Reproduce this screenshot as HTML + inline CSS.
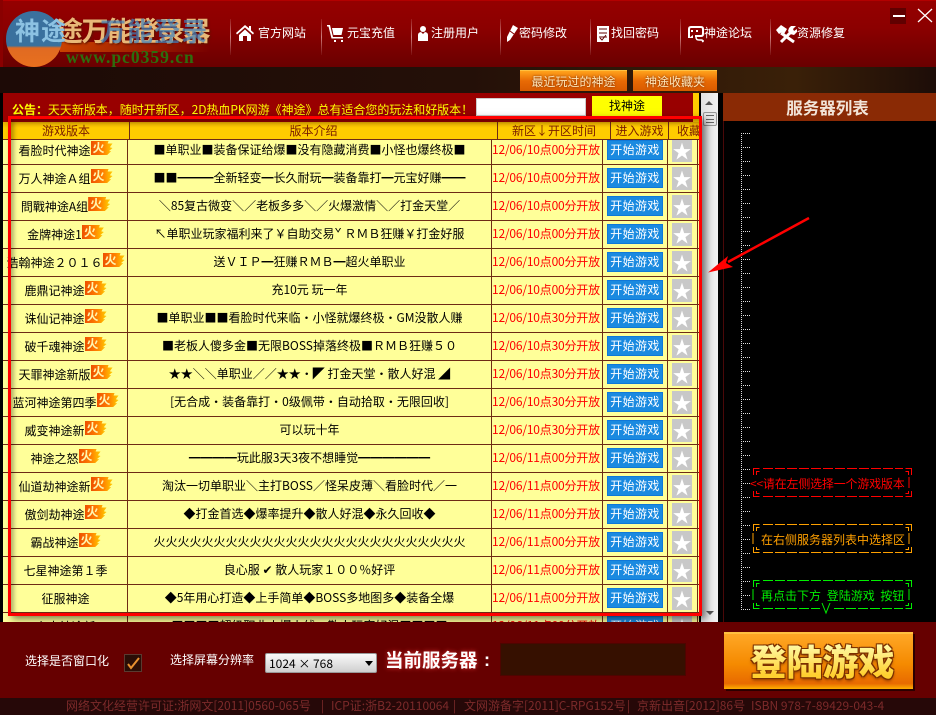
<!DOCTYPE html>
<html><head><meta charset="utf-8"><style>
*{box-sizing:border-box;margin:0;padding:0}
html,body{width:936px;height:715px;overflow:hidden;background:#000}
body{position:relative;font:12px/14px "WenQuanYi Zen Hei","Noto Sans CJK SC",sans-serif;color:#000}
.a{position:absolute;white-space:nowrap}
#head{left:0;top:0;width:936px;height:67px;background:linear-gradient(#950000,#8c0000 40%,#6a0000);border-top:1px solid #b30000}
.nav{color:#fff;top:26px;font-size:12px}
.sep{top:19px;width:1px;height:36px;background:linear-gradient(rgba(255,255,255,.1),rgba(255,210,210,.6),rgba(255,255,255,.05))}
#strip{left:0;top:67px;width:936px;height:26px;background:linear-gradient(90deg,#1d0a06,#241008 50%,#3a2008 85%,#1d0d08)}
.tb{top:70px;height:21px;background:linear-gradient(#ffa31c,#e86a04 50%,#d85a00);color:#ffe6b8;text-align:center;line-height:21px;text-shadow:0 0 2px #6a2500;border-top:1px solid #ffc040}
#tbl{left:3px;top:93px;width:696px;height:529px;background:#ffff99;overflow:hidden}
#notice{left:0;top:0;width:690px;height:29px;background:#990000}
#thead{left:0;top:29px;width:696px;height:18px;background:linear-gradient(#e3aa00,#ffcc00 35%);color:#7a1d00;line-height:18px;border-bottom:1px solid #6e2b15}
.th{top:0;text-align:center}
.vl{top:0;width:1px;background:#6e2b15}
.r{position:absolute;left:0;width:696px;height:28px;border-bottom:1px solid #6e2b15}
.n{position:absolute;left:0;top:1px;width:125px;height:26px;display:flex;justify-content:center;align-items:center;white-space:nowrap}
.d{position:absolute;left:125px;width:363px;top:0;height:26px;line-height:26px;text-align:center;white-space:nowrap}
.t{position:absolute;left:489px;top:0;height:26px;line-height:26px;color:#f00;white-space:nowrap;letter-spacing:-.2px}
.b{position:absolute;left:604px;top:3px;width:56px;height:20px;background:#1a8ae0;color:#fff;text-align:center;line-height:18px;border:1px solid #0f78d8;letter-spacing:.4px}
.s{position:absolute;left:669px;top:2px;width:20px;height:23px;background:#c8c8c8;color:#fff;text-align:center;font-size:19px;line-height:23px}
.f{display:inline-block;position:relative;top:-3px;width:22px;height:14px;background:linear-gradient(90deg,#ee5000,#ff8000 55%,#ffd000);color:#fff6b0;font-size:12px;font-weight:bold;line-height:14px;padding-left:2px;clip-path:polygon(0 0,82% 0,78% 18%,100% 18%,88% 45%,100% 50%,84% 72%,94% 72%,76% 100%,0 100%)}
#sb{left:701px;top:93px;width:17px;height:529px;background:linear-gradient(90deg,#e2e2e2,#f2f2f2)}
#foot{left:0;top:622px;width:936px;height:76px;background:#660000}
#bot{left:0;top:698px;width:936px;height:17px;background:#260808;color:#7c2a2a;line-height:16px}
</style></head><body>
<div class="a" id="head"></div>
<div class="a" style="left:0;top:0;width:3px;height:67px;background:#8a0000"></div>

<div class="a" style="left:60px;top:42px;width:150px;height:10px;background:linear-gradient(90deg,#ff7000,rgba(160,0,0,0));opacity:.6"></div>
<div class="a" style="left:56px;top:14px;font:bold 27px/32px 'Noto Sans CJK SC',sans-serif;color:#e9b878;text-shadow:1px 1px 2px #5a1500;letter-spacing:-1.500px">途万能登录器</div>
<div class="a" style="left:6px;top:11px;width:56px;height:56px;border-radius:50%;background:linear-gradient(rgba(50,125,175,.9) 0,rgba(50,125,175,.9) 62%,#e06a22 66%,#e8701e)"></div>
<div class="a" style="left:15px;top:14px;font:bold 25px/32px 'Noto Sans CJK SC',sans-serif;color:#8cc2e2;letter-spacing:1px">神途</div>
<div class="a" style="left:100px;top:15px;font:bold 26px/32px 'Noto Sans CJK SC',sans-serif;color:rgba(60,130,190,.7);letter-spacing:1px">万能登录</div>
<div class="a" style="left:66px;top:48px;font:bold 17.500px/19px 'Liberation Serif',serif;color:#2d6e0e;letter-spacing:1px">www.pc0359.cn</div>

<div class="a sep" style="left:230px"></div><div class="a sep" style="left:321px"></div><div class="a sep" style="left:411px"></div><div class="a sep" style="left:500px"></div><div class="a sep" style="left:590px"></div><div class="a sep" style="left:680px"></div><div class="a sep" style="left:770px"></div>

<svg class="a" style="left:0;top:0" width="936" height="67" fill="#fff">
<path d="M245 25l-9 8 1 1.500 8-7 8 7 1-1.500-3-2.600V26h-2v2.200z"/><path d="M239 35l6-5.500 6 5.500v6h-4v-5h-4v5h-4z"/>
<path d="M327 25h3l3 12h10v1.500h-11.500l-3-12H327z"/><path d="M332 28h11l-1.500 7h-8zM334 40h2v2h-2zM341 40h2v2h-2z"/>
<circle cx="423" cy="29" r="3"/><path d="M418 41v-6q0-2.500 3-3l2 2 2-2q3 .500 3 3v6z"/>
<path d="M513 25l5 3-8 12-3 2 0-5z"/><path d="M510 31l4 3" stroke="#800000"/>
<path d="M597 26h12v16h-12z"/><path d="M599 29h8M599 33h8M599 37h8" stroke="#600000"/><path d="M600 38l2 2 4-5" stroke="#600000" fill="none"/>
<path d="M689 38v-9q0-2 2-2h10q2 0 2 2v5q0 2-2 2h-6" fill="none" stroke="#fff" stroke-width="2"/><path d="M689 38l4-3v3z"/><path d="M691 30h2v2h-2zM696 30h2v2h-2z"/><path d="M696 37q0 3 3 3h3l1 2v-2" fill="none" stroke="#fff" stroke-width="1.500"/>
<path d="M781 33L794 42M793 30L781 42" stroke="#fff" stroke-width="3" fill="none"/><path d="M776 30l5-5 6 4-3 5-2-2-3 2zM789 28l2-2 5 0-3 3 1 2 3-2 0 3-3 3-4-1-2-3z"/>
<rect x="890" y="8" width="16" height="16" fill="#600000"/><rect x="893" y="15" width="12" height="2"/>
<path d="M918 9l14 13M932 9l-14 13" stroke="#fff" stroke-width="1.300"/>
</svg>
<div class="a nav" style="left:258px">官方网站</div>
<div class="a nav" style="left:347px">元宝充值</div>
<div class="a nav" style="left:431px">注册用户</div>
<div class="a nav" style="left:519px">密码修改</div>
<div class="a nav" style="left:611px">找回密码</div>
<div class="a nav" style="left:704px">神途论坛</div>
<div class="a nav" style="left:797px">资源修复</div>

<div class="a" id="strip"></div>
<div class="a tb" style="left:520px;width:107px">最近玩过的神途</div>
<div class="a tb" style="left:633px;width:84px">神途收藏夹</div>

<div class="a" id="tbl">
<div class="r" style="top:44px"><div class="n">看脸时代神途<span class="f">火</span></div><div class="d">■单职业■装备保证给爆■没有隐藏消费■小怪也爆终极■</div><div class="t">12/06/10点00分开放</div><div class="b">开始游戏</div><div class="s">★</div></div>
<div class="r" style="top:72px"><div class="n">万人神途Ａ组<span class="f">火</span></div><div class="d">■■━━━全新轻变━长久耐玩━装备靠打━元宝好赚━━</div><div class="t">12/06/10点00分开放</div><div class="b">开始游戏</div><div class="s">★</div></div>
<div class="r" style="top:100px"><div class="n">問戰神途A组<span class="f">火</span></div><div class="d">＼85复古微变＼／老板多多＼／火爆激情＼／打金天堂／</div><div class="t">12/06/10点00分开放</div><div class="b">开始游戏</div><div class="s">★</div></div>
<div class="r" style="top:128px"><div class="n">金牌神途1<span class="f">火</span></div><div class="d">↖单职业玩家福利来了￥自助交易ˇ ＲＭＢ狂赚￥打金好服</div><div class="t">12/06/10点00分开放</div><div class="b">开始游戏</div><div class="s">★</div></div>
<div class="r" style="top:156px"><div class="n">浩翰神途２０１６<span class="f">火</span></div><div class="d">送ＶＩＰ━狂赚ＲＭＢ━超火单职业</div><div class="t">12/06/10点00分开放</div><div class="b">开始游戏</div><div class="s">★</div></div>
<div class="r" style="top:184px"><div class="n">鹿鼎记神途<span class="f">火</span></div><div class="d">充10元 玩一年</div><div class="t">12/06/10点00分开放</div><div class="b">开始游戏</div><div class="s">★</div></div>
<div class="r" style="top:212px"><div class="n">诛仙记神途<span class="f">火</span></div><div class="d">■单职业■■看脸时代来临·小怪就爆终极·GM没散人赚</div><div class="t">12/06/10点30分开放</div><div class="b">开始游戏</div><div class="s">★</div></div>
<div class="r" style="top:240px"><div class="n">破千魂神途<span class="f">火</span></div><div class="d">■老板人傻多金■无限BOSS掉落终极■ＲＭＢ狂赚５０</div><div class="t">12/06/10点30分开放</div><div class="b">开始游戏</div><div class="s">★</div></div>
<div class="r" style="top:268px"><div class="n">天罪神途新版<span class="f">火</span></div><div class="d">★★＼＼单职业／／★★·◤ 打金天堂·散人好混 ◢</div><div class="t">12/06/10点30分开放</div><div class="b">开始游戏</div><div class="s">★</div></div>
<div class="r" style="top:296px"><div class="n">蓝河神途第四季<span class="f">火</span></div><div class="d">[无合成·装备靠打·0级佩带·自动拾取·无限回收]</div><div class="t">12/06/10点30分开放</div><div class="b">开始游戏</div><div class="s">★</div></div>
<div class="r" style="top:324px"><div class="n">威变神途新<span class="f">火</span></div><div class="d">可以玩十年</div><div class="t">12/06/10点30分开放</div><div class="b">开始游戏</div><div class="s">★</div></div>
<div class="r" style="top:352px"><div class="n">神途之怒<span class="f">火</span></div><div class="d">━━━━玩此服3天3夜不想睡觉━━━━━━</div><div class="t">12/06/11点00分开放</div><div class="b">开始游戏</div><div class="s">★</div></div>
<div class="r" style="top:380px"><div class="n">仙道劫神途新<span class="f">火</span></div><div class="d">淘汰一切单职业＼主打BOSS／怪呆皮薄＼看脸时代／一</div><div class="t">12/06/11点00分开放</div><div class="b">开始游戏</div><div class="s">★</div></div>
<div class="r" style="top:408px"><div class="n">傲剑劫神途<span class="f">火</span></div><div class="d">◆打金首选◆爆率提升◆散人好混◆永久回收◆</div><div class="t">12/06/11点00分开放</div><div class="b">开始游戏</div><div class="s">★</div></div>
<div class="r" style="top:436px"><div class="n">霸战神途<span class="f">火</span></div><div class="d">火火火火火火火火火火火火火火火火火火火火火火火火火火</div><div class="t">12/06/11点00分开放</div><div class="b">开始游戏</div><div class="s">★</div></div>
<div class="r" style="top:464px"><div class="n">七星神途第１季</div><div class="d">良心服 ✔ 散人玩家１００％好评</div><div class="t">12/06/11点00分开放</div><div class="b">开始游戏</div><div class="s">★</div></div>
<div class="r" style="top:492px"><div class="n">征服神途</div><div class="d">◆5年用心打造◆上手简单◆BOSS多地图多◆装备全爆</div><div class="t">12/06/11点00分开放</div><div class="b">开始游戏</div><div class="s">★</div></div>
<div class="r" style="top:520px"><div class="n">上古神途新</div><div class="d">■■■■超级职业火爆上线·散人玩家好混■■■■</div><div class="t">12/06/11点00分开放</div><div class="b">开始游戏</div><div class="s">★</div></div>
<div class="a vl" style="left:124px;top:43px;height:490px"></div>
<div class="a vl" style="left:488px;top:43px;height:490px"></div>
<div class="a vl" style="left:599px;top:43px;height:490px"></div>
<div class="a vl" style="left:664px;top:43px;height:490px"></div>
<div class="a vl" style="left:694px;top:43px;height:490px"></div>
<div class="a" id="notice"></div>
<div class="a" style="left:690px;top:0;width:6px;height:29px;background:#ffcc00"></div>
<div class="a" id="thead">
<div class="a vl" style="left:126px;height:18px"></div><div class="a vl" style="left:494px;height:18px"></div><div class="a vl" style="left:607px;height:18px"></div><div class="a vl" style="left:665px;height:18px"></div>
<div class="a th" style="left:0;width:126px">游戏版本</div>
<div class="a th" style="left:127px;width:367px">版本介绍</div>
<div class="a th" style="left:495px;width:112px">新区↓开区时间</div>
<div class="a th" style="left:608px;width:57px">进入游戏</div>
<div class="a th" style="left:674px">收藏</div>
</div>
</div>
<div class="a" style="left:12px;top:103px;color:#ff0;letter-spacing:-.03px"><b>公告：</b>天天新版本，随时开新区，2D热血PK网游《神途》总有适合您的玩法和好版本！</div>
<div class="a" style="left:476px;top:98px;width:110px;height:18px;background:#fff;border:1px solid #ccc"></div>
<div class="a" style="left:592px;top:96px;width:70px;height:20px;background:#ff0;text-align:center;line-height:20px">找神途</div>

<div class="a" id="sb"></div>
<div class="a" style="left:705px;top:101px;border:4px solid transparent;border-top:0;border-bottom:4px solid #555"></div>
<div class="a" style="left:703px;top:112px;width:14px;height:14px;background:#e8e8e8;border:1px solid #999;border-radius:2px"></div>
<div class="a" style="left:706px;top:115px;width:8px;height:8px;border-top:1px solid #666;border-bottom:1px solid #666;background:linear-gradient(transparent 3px,#666 3px,#666 4px,transparent 4px)"></div>
<div class="a" style="left:706px;top:611px;border:4px solid transparent;border-bottom:0;border-top:4px solid #555"></div>

<div class="a" style="left:8px;top:116px;width:694px;height:500px;border:3.500px solid #f00;box-shadow:4px 3px 7px rgba(0,0,0,.5),inset 3px 3px 4px rgba(0,0,0,.3)"></div>

<div class="a" style="left:723px;top:93px;width:213px;height:28px;background:#8a2a05;color:#f2e4d8;text-align:center;padding-right:4px;font:bold 16.500px/29px 'Noto Sans CJK SC',sans-serif">服务器列表</div>
<div class="a" style="left:723px;top:121px;width:1px;height:501px;background:#4a0808"></div>

<svg class="a" style="left:723px;top:121px" width="213" height="501">
<defs><pattern id="tick" x="0" y="12" width="30" height="14" patternUnits="userSpaceOnUse"><path d="M18 .5h9" stroke="#ddd" stroke-dasharray="1 1"/></pattern></defs>
<rect x="18" y="12" width="12" height="477" fill="url(#tick)"/>
<path d="M18.500 12V489" stroke="#ddd" stroke-dasharray="1 1"/>
<g fill="none" stroke-width="1">
<g stroke="#f00"><path d="M30.500 354v-6.500h6M188.500 354v-6.500h-6M30.500 370v5.500h6M188.500 370v5.500h-6M33.500 354v-3.500h3M185.500 354v-3.500h-3M33.500 370v2.500h3M185.500 370v2.500h-3"/><path d="M40 347.500h140M40 375.500h140" stroke-dasharray="10 2"/><path d="M186 356v11"/></g>
<g stroke="#ffa000"><path d="M30.500 410v-6.500h6M188.500 410v-6.500h-6M30.500 426v5.500h6M188.500 426v5.500h-6M33.500 410v-3.500h3M185.500 410v-3.500h-3M33.500 426v2.500h3M185.500 426v2.500h-3"/><path d="M40 403.500h140M40 431.500h140" stroke-dasharray="10 2"/><path d="M30 412v11M186 412v11"/></g>
<g stroke="#00f000"><path d="M30.500 466v-6.500h6M188.500 466v-6.500h-6M30.500 482v5.500h6M188.500 482v5.500h-6M33.500 466v-3.500h3M185.500 466v-3.500h-3M33.500 482v2.500h3M185.500 482v2.500h-3"/><path d="M40 459.500h140M40 487.500h57M111 487.500h69" stroke-dasharray="10 2"/><path d="M30 468v11M186 468v11M99 482l4 10 4-10"/></g>
</g></svg>
<div class="a" style="left:750px;top:477px;color:#f00;letter-spacing:-.2px">&lt;&lt;请在左侧选择一个游戏版本</div>
<div class="a" style="left:761px;top:533px;color:#ffa000">在右侧服务器列表中选择区</div>
<div class="a" style="left:761px;top:589px;color:#00f000;word-spacing:3px">再点击下方 登陆游戏 按钮</div>

<svg class="a" style="left:700px;top:210px" width="120" height="70">
<path d="M109 8L28 52" stroke="#f00" stroke-width="2.500"/>
<path d="M8 62.500L28 46 26 53 33 57z" fill="#f00"/></svg>

<div class="a" id="foot"></div>
<div class="a" style="left:25px;top:654px;color:#fff">选择是否窗口化</div>
<div class="a" style="left:124px;top:654px;width:18px;height:18px;background:#2a0d06;border:1px solid #5a3a30"></div>
<svg class="a" style="left:124px;top:654px" width="18" height="18"><path d="M4 10l3 4 8-10" stroke="#e89030" stroke-width="2" fill="none"/></svg>
<div class="a" style="left:170px;top:653px;color:#fff">选择屏幕分辨率</div>
<div class="a" style="left:265px;top:653px;width:112px;height:20px;background:linear-gradient(#fafafa,#cfcfcf);border:1px solid #999;border-radius:2px;line-height:19px;padding-left:3px">1024 × 768</div>
<div class="a" style="left:365px;top:661px;border:4px solid transparent;border-bottom:0;border-top:5px solid #000"></div>
<div class="a" style="left:385px;top:648px;color:#fff;font:bold 18.500px/24px 'Noto Sans CJK SC',sans-serif;text-shadow:0 0 5px #e03030">当前服务器</div>
<div class="a" style="left:484px;top:648px;color:#fff;font:bold 18px/24px 'Liberation Sans',sans-serif">:</div>
<div class="a" style="left:500px;top:643px;width:186px;height:33px;background:#361000;border:1px solid #4d0500"></div>
<div class="a" style="left:724px;top:632px;width:189px;height:57px;background:linear-gradient(#ffa726,#f58a00 55%,#e86a00 90%,#ffb000);border-top:2px solid #ffc040;box-shadow:2px 2px 0 #2a0000"></div>
<div class="a" style="left:728px;top:632px;width:189px;height:57px;text-align:center;font:900 36px/56px 'Noto Sans CJK SC',sans-serif;color:#7a2f00;text-shadow:-1px -1px 0 #7a2f00,1px -1px 0 #7a2f00,-1px 1px 0 #7a2f00,1px 1px 0 #7a2f00,0 2px 3px #7a2f00">登陆游戏</div>
<div class="a" style="left:728px;top:632px;width:189px;height:57px;text-align:center;font:900 36px/56px 'Noto Sans CJK SC',sans-serif;color:transparent;background:linear-gradient(#fff8a0 25%,#ffd030 75%);-webkit-background-clip:text;background-clip:text">登陆游戏</div>
<div class="a" id="bot">
<span class="a" style="left:66px;top:0">网络文化经营许可证:浙网文[2011]0560-065号</span>
<span class="a" style="left:321px;top:0">|</span>
<span class="a" style="left:331px;top:0">ICP证:浙B2-20110064</span>
<span class="a" style="left:453px;top:0">|</span>
<span class="a" style="left:464px;top:0">文网游备字[2011]C-RPG152号</span>
<span class="a" style="left:627px;top:0">|</span>
<span class="a" style="left:637px;top:0">京新出音[2012]86号</span>
<span class="a" style="left:751px;top:0">ISBN 978-7-89429-043-4</span>
</div>
</body></html>
